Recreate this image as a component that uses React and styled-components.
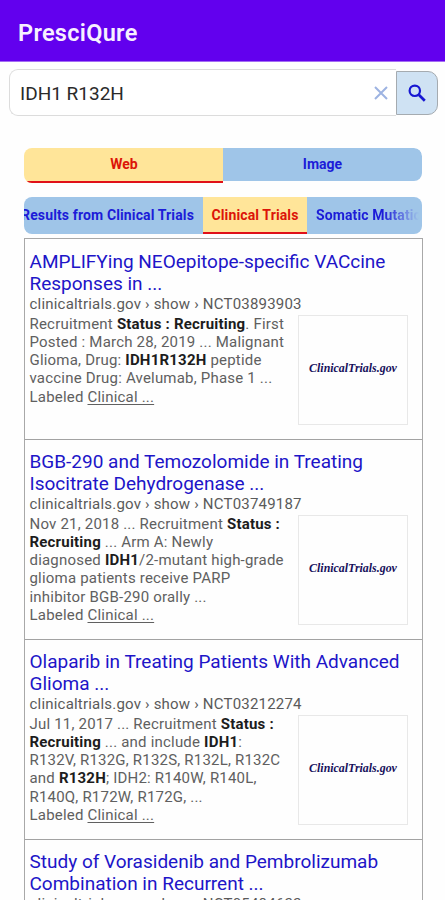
import React from "react";
import styled, { createGlobalStyle } from "styled-components";

const GlobalStyle = createGlobalStyle`
  * { box-sizing: border-box; }
  html, body { margin: 0; background: #fefefe; overflow: hidden; }
  body { font-family: Roboto, "Liberation Sans", sans-serif; }
`;

const Screen = styled.div`
  width: 445px;
  height: 900px;
  overflow: hidden;
  display: flex;
  flex-direction: column;
`;

const AppBar = styled.header`
  height: 62px;
  flex: none;
  display: flex;
  align-items: center;
  padding: 4px 18px 0;
  background: #6200ee;
  border-bottom: 1px solid #a36cf3;
  color: #f7f0ff;
`;

const AppTitle = styled.h1`
  margin: 0;
  font-size: 23.5px;
  font-weight: 600;
  line-height: 28px;
  letter-spacing: 0.3px;
`;

const SearchBar = styled.form`
  flex: none;
  display: flex;
  align-items: center;
  margin: 7px 7px 0 9px;
  height: 47px;
`;

const Field = styled.div`
  flex: 1;
  height: 47px;
  display: flex;
  align-items: center;
  justify-content: space-between;
  padding: 0 7px 0 10px;
  border: 1px solid #dcdcdc;
  border-right: 0;
  border-radius: 9px 0 0 9px;
  background: #fff;
`;

const Query = styled.span`
  font-size: 19px;
  line-height: 24px;
  color: #2a2a2a;
  padding-top: 2px;
`;

const SearchButton = styled.button`
  width: 42px;
  height: 44px;
  padding: 0;
  display: flex;
  align-items: center;
  justify-content: center;
  border: 1px solid #a5abb0;
  border-radius: 0 10px 10px 0;
  background: #cfe2f3;
`;

const Tabs = styled.nav`
  flex: none;
  display: flex;
  width: 398px;
  height: ${(p) => p.$height}px;
  margin: ${(p) => p.$top}px 0 0 24px;
  border-radius: 8px;
  overflow: hidden;
`;

const Tab = styled.div`
  flex: none;
  width: ${(p) => p.$width}px;
  height: ${(p) => p.$height}px;
  display: flex;
  align-items: center;
  justify-content: ${(p) => p.$align || "center"};
  overflow: hidden;
  white-space: nowrap;
  font-size: 14px;
  font-weight: 700;
  line-height: 18px;
  letter-spacing: ${(p) => p.$spacing || 0}px;
  padding: ${(p) => p.$pad || "0"};
  color: ${(p) => (p.$active ? "#dc1408" : "#1c1cd8")};
  background: ${(p) => (p.$active ? "#ffe599" : "#9fc5e8")};
  border-bottom: ${(p) => (p.$active ? "2px solid #e01018" : "0")};
  border-radius: ${(p) => p.$radius || "0"};
`;

const Fade = styled.span`
  background: linear-gradient(90deg, #1c1cd8 65%, #9fc5e8 100%);
  background-clip: text;
  color: transparent;
  width: 103px;
  overflow: hidden;
`;

const Results = styled.main`
  flex: none;
  width: 399px;
  margin: 4px 0 0 24px;
  border: 1px solid #a8a8a8;
`;

const Card = styled.article`
  height: 200px;
  padding: 11px 0 0 4.5px;
  border-bottom: 1px solid #a2a2a2;
  white-space: nowrap;

  &:first-child {
    height: 201px;
    padding-top: 12px;
  }
`;

const Title = styled.h2`
  margin: 0 0 1px;
  font-size: 19px;
  font-weight: 400;
  line-height: 22px;
  color: #2014c8;
`;

const Line = styled.div`
  width: max-content;
`;

const Source = styled.div`
  margin-bottom: 3.2px;
  font-size: 15px;
  line-height: 16px;
  letter-spacing: 0.2px;
  color: #5a5a5a;
`;

const Body = styled.div`
  display: flex;
  justify-content: space-between;
  padding-right: 14px;
`;

const Snippet = styled.div`
  font-size: 15px;
  line-height: 18.1px;
  letter-spacing: 0.2px;
  color: #606060;
  b { color: #1c1c1c; }
  u { text-underline-offset: 2px; text-decoration-thickness: 1px; }
`;

const Thumb = styled.div`
  width: 110px;
  height: 110px;
  display: flex;
  align-items: center;
  justify-content: center;
  padding-bottom: 4px;
  border: 1px solid #e8e8e8;
  font: italic 700 11.9px/14px "Liberation Serif", serif;
  color: #17115c;
`;

const results = [
  {
    title: ["AMPLIFYing NEOepitope-specific VACcine", "Responses in ..."],
    id: "NCT03893903",
    lines: [
      <>Recruitment <b>Status : Recruiting</b>. First</>,
      <>Posted : March 28, 2019 ... Malignant</>,
      <>Glioma, Drug: <b>IDH1R132H</b> peptide</>,
      <>vaccine Drug: Avelumab, Phase 1 ...</>,
      <>Labeled <u>Clinical ...</u></>,
    ],
  },
  {
    title: ["BGB-290 and Temozolomide in Treating", "Isocitrate Dehydrogenase ..."],
    id: "NCT03749187",
    lines: [
      <>Nov 21, 2018 ... Recruitment <b>Status :</b></>,
      <><b>Recruiting</b> ... Arm A: Newly</>,
      <>diagnosed <b>IDH1</b>/2-mutant high-grade</>,
      <>glioma patients receive PARP</>,
      <>inhibitor BGB-290 orally ...</>,
      <>Labeled <u>Clinical ...</u></>,
    ],
  },
  {
    title: ["Olaparib in Treating Patients With Advanced", "Glioma ..."],
    id: "NCT03212274",
    lines: [
      <>Jul 11, 2017 ... Recruitment <b>Status :</b></>,
      <><b>Recruiting</b> ... and include <b>IDH1</b>:</>,
      <>R132V, R132G, R132S, R132L, R132C</>,
      <>and <b>R132H</b>; IDH2: R140W, R140L,</>,
      <>R140Q, R172W, R172G, ...</>,
      <>Labeled <u>Clinical ...</u></>,
    ],
  },
  {
    title: ["Study of Vorasidenib and Pembrolizumab", "Combination in Recurrent ..."],
    id: "NCT05484622",
    lines: [],
  },
];

function Result({ item }) {
  return (
    <Card>
      <Title>
        {item.title.map((text) => <Line key={text}>{text}</Line>)}
      </Title>
      <Source>clinicaltrials.gov › show › {item.id}</Source>
      {item.lines.length > 0 && (
        <Body>
          <Snippet>
            {item.lines.map((text, i) => <Line key={i}>{text}</Line>)}
          </Snippet>
          <Thumb>ClinicalTrials.gov</Thumb>
        </Body>
      )}
    </Card>
  );
}

export default function App() {
  return (
    <Screen>
      <GlobalStyle />
      <AppBar><AppTitle>PresciQure</AppTitle></AppBar>
      <SearchBar>
        <Field>
          <Query>IDH1 R132H</Query>
          <svg width="16" height="16" viewBox="0 0 16 16" fill="none" stroke="#9db3e2" strokeWidth="2">
            <path d="M2 2 14 14M14 2 2 14" />
          </svg>
        </Field>
        <SearchButton type="button" aria-label="Search">
          <svg width="18" height="18" viewBox="0 0 18 18" fill="none" stroke="#1717d2">
            <circle cx="6.8" cy="6.8" r="5.2" strokeWidth="2.2" />
            <path d="M10.8 10.8 16.8 16.8" strokeWidth="2.7" />
          </svg>
        </SearchButton>
      </SearchBar>
      <Tabs $top={32} $height={35}>
        <Tab $active $width={199} $height={35} $pad="0 0 1px 1px">Web</Tab>
        <Tab $width={199} $height={33} $pad="0 0 1px" $radius="0 8px 8px 0">Image</Tab>
      </Tabs>
      <Tabs $top={14} $height={37}>
        <Tab $width={179} $height={37} $align="flex-end" $spacing={0.13} $pad="0 9px 1px 0">Results from Clinical Trials</Tab>
        <Tab $active $width={104} $height={37} $spacing={0.12}>Clinical Trials</Tab>
        <Tab $width={115} $height={37} $align="flex-start" $spacing={0.1} $pad="0 0 1px 9px"><Fade>Somatic Mutations</Fade></Tab>
      </Tabs>
      <Results>
        {results.map((item) => <Result key={item.id} item={item} />)}
      </Results>
    </Screen>
  );
}
